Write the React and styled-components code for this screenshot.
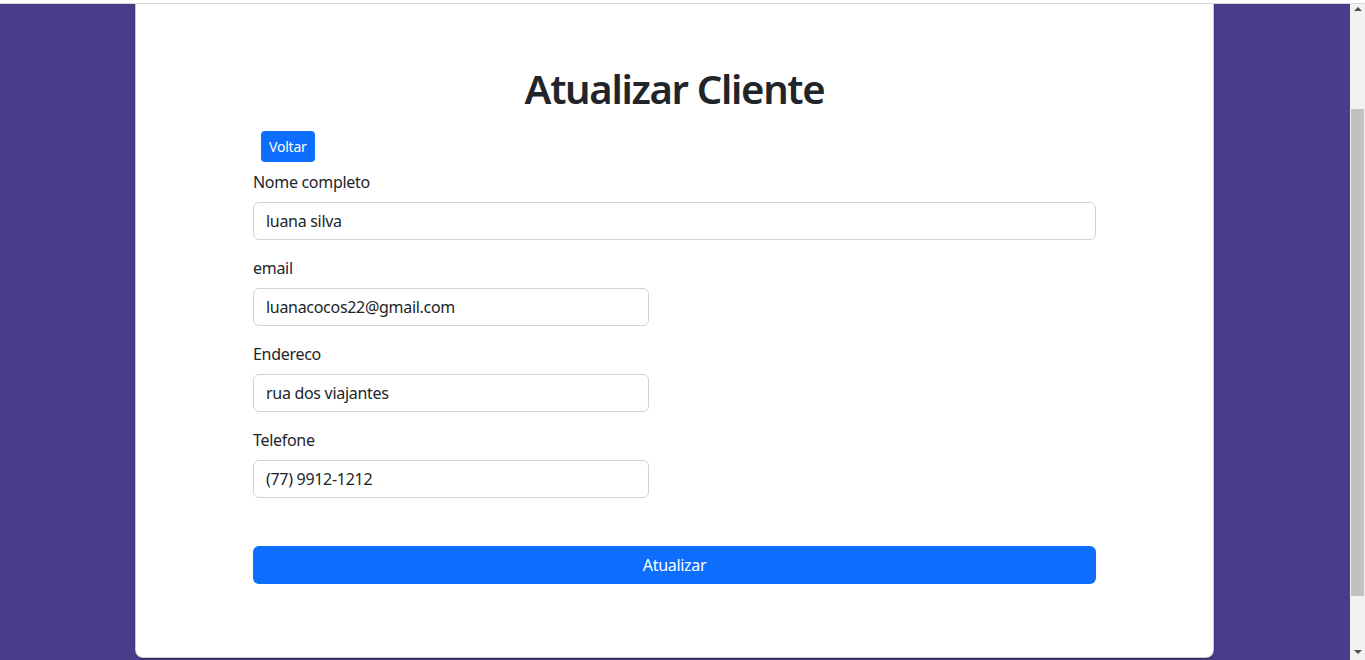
import React, { useLayoutEffect } from 'react';
import styled, { createGlobalStyle } from 'styled-components';

const GlobalStyle = createGlobalStyle`
  html {
    scroll-behavior: auto;
  }
  body {
    margin: 0;
    background: #483d8b;
    font-family: "Noto Sans", "Open Sans", sans-serif;
    color: #212529;
  }
  * {
    box-sizing: border-box;
  }
`;

const TopEdge = styled.div`
  position: fixed;
  top: 0;
  left: 0;
  right: 0;
  height: 4px;
  background: #fff;
  border-bottom: 1px solid #d9d9d9;
  z-index: 10;
`;

// window scrollbar, drawn since the headless browser hides it
const ScrollRail = styled.div`
  position: fixed;
  top: 0;
  right: 0;
  bottom: 0;
  width: 15px;
  background: #f1f1f1;
  display: flex;
  flex-direction: column;
  z-index: 5;
`;

const RailArrow = styled.div`
  height: 17px;
  display: flex;
  align-items: center;
  justify-content: center;
  flex-shrink: 0;
  &::before {
    content: '';
    border-left: 4px solid transparent;
    border-right: 4px solid transparent;
    ${p =>
      p.$down
        ? 'border-top: 4px solid #505050;'
        : 'border-bottom: 4px solid #505050;'}
  }
`;

const RailTrack = styled.div`
  flex: 1;
  padding: 92px 1px 0;
`;

const RailThumb = styled.div`
  height: 487px;
  background: #c1c1c1;
`;

const Page = styled.div`
  padding: 40px 16px 65px 0;
`;

const Card = styled.div`
  width: 1079px;
  margin: 0 auto;
  background: #fff;
  border: 1px solid rgba(0, 0, 0, 0.2);
  border-radius: 8px;
  box-shadow: 0 1px 2px rgba(0, 0, 0, 0.35);
  padding: 149px 117px 73px;
`;

const Title = styled.h1`
  margin: 0 0 18px;
  font-size: 40px;
  line-height: 48px;
  font-weight: 600;
  letter-spacing: -1.3px;
  text-align: center;
  color: #212529;
`;

const SmallButton = styled.button`
  display: inline-block;
  margin: 0 0 8px 8px;
  height: 31px;
  padding: 0 8px;
  border: none;
  border-radius: 4px;
  background: #0d6efd;
  color: #fff;
  font-family: inherit;
  font-size: 14px;
  letter-spacing: -0.2px;
  line-height: 31px;
  cursor: pointer;
`;

const Form = styled.form`
  display: flex;
  flex-direction: column;
`;

const Group = styled.div`
  display: flex;
  flex-direction: column;
  margin-bottom: 16px;
`;

const Label = styled.label`
  font-size: 16px;
  line-height: 24px;
  letter-spacing: -0.3px;
  margin-bottom: 8px;
`;

const Input = styled.input`
  width: ${p => (p.$wide ? '100%' : '396px')};
  height: 38px;
  padding: 0 12px;
  border: 1px solid #ced4da;
  border-radius: 6px;
  font-family: inherit;
  font-size: 16px;
  letter-spacing: -0.3px;
  color: #212529;
  background: #fff;
  outline: none;
`;

const SubmitButton = styled.button`
  margin-top: 32px;
  width: 100%;
  height: 38px;
  border: none;
  border-radius: 6px;
  background: #0d6efd;
  color: #fff;
  font-family: inherit;
  font-size: 16px;
  letter-spacing: -0.3px;
  cursor: pointer;
`;

const fields = [
  { id: 'nome', label: 'Nome completo', value: 'luana silva', wide: true },
  { id: 'email', label: 'email', value: 'luanacocos22@gmail.com' },
  { id: 'endereco', label: 'Endereco', value: 'rua dos viajantes' },
  { id: 'telefone', label: 'Telefone', value: '(77) 9912-1212' },
];

export default function App() {
  useLayoutEffect(() => {
    window.scrollTo(0, 125);
  }, []);

  return (
    <>
      <GlobalStyle />
      <TopEdge />
      <ScrollRail>
        <RailArrow />
        <RailTrack>
          <RailThumb />
        </RailTrack>
        <RailArrow $down />
      </ScrollRail>
      <Page>
        <Card>
          <Title>Atualizar Cliente</Title>
          <SmallButton type="button">Voltar</SmallButton>
          <Form onSubmit={e => e.preventDefault()}>
            {fields.map(f => (
              <Group key={f.id}>
                <Label htmlFor={f.id}>{f.label}</Label>
                <Input id={f.id} $wide={f.wide} defaultValue={f.value} />
              </Group>
            ))}
            <SubmitButton type="submit">Atualizar</SubmitButton>
          </Form>
        </Card>
      </Page>
    </>
  );
}
